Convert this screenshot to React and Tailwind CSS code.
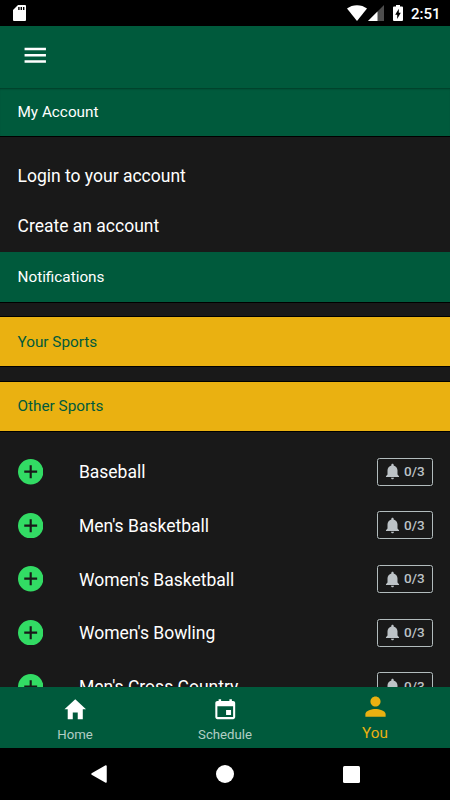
import React from 'react';

const sports = ['Baseball', "Men's Basketball", "Women's Basketball", "Women's Bowling", "Men's Cross Country"];

function Icon({ d, className }) {
  return (
    <svg viewBox="0 0 512 512" fill="currentColor" className={className} aria-hidden="true">
      <path d={d} />
    </svg>
  );
}

const MENU = 'M64 390h384v-44H64V390zm0-112h384v-44H64v44zM64 122v44h384v-44H64z';
const HOME = 'M208 448V320h96v128h97.6V256H464L256 64 48 256h62.4v192z';
const CALENDAR =
  'M368.005 272h-96v96h96v-96zm-32-208v32h-160V64h-48v32h-24.01c-22.002 0-40 17.998-40 40v272c0 22.002 17.998 40 40 40h304.01c22.002 0 40-17.998 40-40V136c0-22.002-17.998-40-40-40h-24V64h-48zm72 344h-304.01V196h304.01v212z';
const PERSON =
  'M256 256c52.805 0 96-43.201 96-96s-43.195-96-96-96-96 43.201-96 96 43.195 96 96 96zm0 48c-63.598 0-192 32.402-192 96v48h384v-48c0-63.598-128.402-96-192-96z';
const BELL =
  'M256 464c22.779 0 41.411-18.719 41.411-41.6h-82.823c0 22.881 18.633 41.6 41.412 41.6zm134.589-124.8V224.8c0-63.44-44.516-117.518-103.53-131.041V79.2c0-17.682-13.457-31.2-31.059-31.2s-31.059 13.518-31.059 31.2v14.559c-59.015 13.523-103.53 67.601-103.53 131.041v114.4L80 380.8v20.8h352v-20.8l-41.411-41.6z';

function StatusBar() {
  return (
    <div className="flex h-[26px] shrink-0 items-center bg-black pr-[10px] pl-[13px] text-white">
      <svg width="13" height="16" viewBox="0 0 13 16" aria-hidden="true">
        <path d="M5 0h7q1 0 1 1v14q0 1-1 1H1q-1 0-1-1V5z" fill="#fff" />
        <path d="M5.2 2h1.4v3H5.2zM7.6 2H9v3H7.6zM10 2h1.4v3H10z" fill="#000" />
      </svg>
      <div className="ml-auto flex items-center">
        <svg width="20" height="16" viewBox="0 0 20 16" aria-hidden="true">
          <path d="M10 16L0 3.6Q4.3.2 10 .2t10 3.4z" fill="#fff" />
        </svg>
        <svg className="ml-[1px]" width="16" height="16" viewBox="0 0 16 16" aria-hidden="true">
          <path d="M16 0v16H0z" fill="#4d4d4d" />
          <path d="M9.5 6.5V16H0z" fill="#fff" />
        </svg>
        <svg className="ml-[9px]" width="10" height="16" viewBox="0 0 10 16" aria-hidden="true">
          <path d="M3 0h4v1.6h2q1 0 1 1V15q0 1-1 1H1q-1 0-1-1V2.6q0-1 1-1h2z" fill="#fff" />
          <path d="M5.8 3.8v4h2L4.2 14V9.7h-2z" fill="#000" />
        </svg>
        <span className="mt-[2px] ml-[8px] w-[29px] text-[15px] leading-none font-medium whitespace-nowrap">2:51</span>
      </div>
    </div>
  );
}

function SportRow({ name }) {
  return (
    <div className="flex h-[53.6px] shrink-0 items-center pr-[17px] pl-[18px]">
      <svg width="25.4" height="25.4" viewBox="0 0 26 26" aria-hidden="true">
        <circle cx="13" cy="13" r="13" fill="#32db64" />
        <path d="M6.4 13h13.2M13 6.4v13.2" stroke="#191919" strokeWidth="2.2" />
      </svg>
      <span className="ml-[35.5px] pt-[1.4px] text-[17.5px] text-white">{name}</span>
      <span className="ml-auto flex h-[28px] w-[56px] items-center rounded-[2.5px] border border-[#b2bcbd] pl-[5px] text-[#bdc3c7]">
        <Icon d={BELL} className="size-[19px] shrink-0" />
        <span className="mt-[-1px] ml-[2px] text-[13.5px] font-medium">0/3</span>
      </span>
    </div>
  );
}

function SectionBar({ children, className }) {
  return <div className={'flex shrink-0 items-center pl-[17.5px] text-[15.3px] ' + className}>{children}</div>;
}

export default function App() {
  return (
    <div className="flex h-[800px] w-[450px] flex-col overflow-hidden bg-[#191919] font-['Roboto',sans-serif]">
      <StatusBar />
      <header className="flex h-[62px] shrink-0 items-center bg-[#005a3c] pl-[21px] text-white">
        <Icon d={MENU} className="mt-[-3px] size-[28.5px]" />
      </header>
      <main className="flex min-h-0 flex-1 flex-col overflow-hidden">
        <SectionBar className="h-[49px] border-b border-black bg-[#005a3c] text-white shadow-[inset_0_2px_2px_-1px_rgba(0,0,0,0.35)]">My Account</SectionBar>
        <div className="flex h-[115px] shrink-0 flex-col pt-[13.6px] pl-[17.5px] text-[17.5px] text-white">
          <div className="flex h-[50.2px] items-center">Login to your account</div>
          <div className="flex h-[50.2px] items-center">Create an account</div>
        </div>
        <SectionBar className="h-[51px] border-b border-black bg-[#005a3c] text-white">Notifications</SectionBar>
        <SectionBar className="mt-[13px] h-[51px] border-y border-black bg-[#eab111] pt-[1px] text-[#005a3c]">Your Sports</SectionBar>
        <SectionBar className="mt-[14px] h-[51px] border-y border-black bg-[#eab111] text-[#005a3c]">Other Sports</SectionBar>
        <div className="flex flex-col pt-[13.1px]">
          {sports.map((s) => (
            <SportRow key={s} name={s} />
          ))}
        </div>
      </main>
      <nav className="grid h-[61px] shrink-0 grid-cols-3 bg-[#005a3c] text-center">
        <div className="flex flex-col items-center pt-[9px]">
          <Icon d={HOME} className="size-[26.5px] text-white" />
          <span className="mt-[3px] text-[13.2px] leading-[17px] text-[#b3cec5]">Home</span>
        </div>
        <div className="flex flex-col items-center pt-[9px]">
          <Icon d={CALENDAR} className="size-[26.5px] text-white" />
          <span className="mt-[3px] text-[13.2px] leading-[17px] text-[#b3cec5]">Schedule</span>
        </div>
        <div className="flex flex-col items-center pt-[6.4px] text-[#eab111]">
          <Icon d={PERSON} className="size-[27px]" />
          <span className="mt-[3.6px] text-[15.3px] leading-[18px]">You</span>
        </div>
      </nav>
      <div className="flex h-[52px] shrink-0 items-center bg-black pl-[91px]">
        <svg width="16" height="18" viewBox="0 0 16 18" aria-hidden="true">
          <path d="M15 1v16L1 9z" fill="#fff" stroke="#fff" strokeWidth="1.5" strokeLinejoin="round" />
        </svg>
        <span className="ml-[109px] size-[18px] rounded-full bg-white" />
        <span className="ml-[109px] size-[17px] rounded-[1.5px] bg-white" />
      </div>
    </div>
  );
}
